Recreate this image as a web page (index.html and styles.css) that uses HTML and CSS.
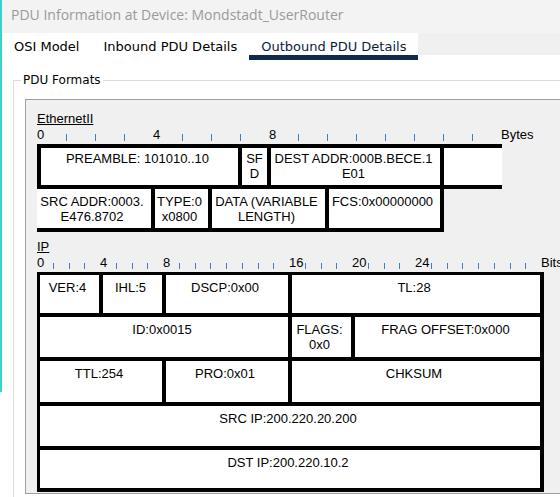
FILE: index.html
```html
<!DOCTYPE html>
<html>
<head>
<meta charset="utf-8">
<link rel="stylesheet" href="styles.css">
</head>
<body>
<div class="edge"><div class="edge-cyan"></div></div>
<div class="window">
  <div class="titlebar">PDU Information at Device: Mondstadt_UserRouter</div>
  <div class="tabs">
    <div class="tab">OSI Model</div>
    <div class="tab">Inbound PDU Details</div>
    <div class="tab active">Outbound PDU Details</div>
    <div class="tabfill"></div>
  </div>
  <div class="content">
    <fieldset class="group">
      <legend>PDU Formats</legend>
      <div class="panel">
        <div class="proto-name">EthernetII</div>
        <div class="ruler bytes">
          <span class="slot"><span class="num">0</span></span>
          <span class="slot"><span class="tick"></span></span>
          <span class="slot"><span class="tick"></span></span>
          <span class="slot"><span class="tick"></span></span>
          <span class="slot"><span class="num">4</span></span>
          <span class="slot"><span class="tick"></span></span>
          <span class="slot"><span class="tick"></span></span>
          <span class="slot"><span class="tick"></span></span>
          <span class="slot"><span class="num">8</span></span>
          <span class="slot"><span class="tick"></span></span>
          <span class="slot"><span class="tick"></span></span>
          <span class="slot"><span class="tick"></span></span>
          <span class="slot"><span class="tick"></span></span>
          <span class="slot"><span class="tick"></span></span>
          <span class="slot"><span class="tick"></span></span>
          <span class="slot"><span class="tick"></span></span>
          <span class="unit">Bytes</span>
        </div>
        <div class="eth-row r1">
          <div class="cell w-pre">PREAMBLE: 101010..10</div>
          <div class="cell w-sfd">SF<br>D</div>
          <div class="cell w-dest">DEST ADDR:000B.BECE.1<br>E01</div>
          <div class="cell w-tail"></div>
        </div>
        <div class="eth-row r2">
          <div class="cell w-src">SRC ADDR:0003.<br>E476.8702</div>
          <div class="cell w-type">TYPE:0<br>x0800</div>
          <div class="cell w-data">DATA (VARIABLE<br>LENGTH)</div>
          <div class="cell w-fcs">FCS:0x00000000</div>
        </div>

        <div class="proto-name ip-name">IP</div>
        <div class="ruler bits">
          <span class="slot"><span class="num">0</span></span>
          <span class="slot"><span class="tick"></span></span>
          <span class="slot"><span class="tick"></span></span>
          <span class="slot"><span class="tick"></span></span>
          <span class="slot"><span class="num">4</span></span>
          <span class="slot"><span class="tick"></span></span>
          <span class="slot"><span class="tick"></span></span>
          <span class="slot"><span class="tick"></span></span>
          <span class="slot"><span class="num">8</span></span>
          <span class="slot"><span class="tick"></span></span>
          <span class="slot"><span class="tick"></span></span>
          <span class="slot"><span class="tick"></span></span>
          <span class="slot"><span class="tick"></span></span>
          <span class="slot"><span class="tick"></span></span>
          <span class="slot"><span class="tick"></span></span>
          <span class="slot"><span class="tick"></span></span>
          <span class="slot"><span class="num">16</span></span>
          <span class="slot"><span class="tick"></span></span>
          <span class="slot"><span class="tick"></span></span>
          <span class="slot"><span class="tick"></span></span>
          <span class="slot"><span class="num">20</span></span>
          <span class="slot"><span class="tick"></span></span>
          <span class="slot"><span class="tick"></span></span>
          <span class="slot"><span class="tick"></span></span>
          <span class="slot"><span class="num">24</span></span>
          <span class="slot"><span class="tick"></span></span>
          <span class="slot"><span class="tick"></span></span>
          <span class="slot"><span class="tick"></span></span>
          <span class="slot"><span class="tick"></span></span>
          <span class="slot"><span class="tick"></span></span>
          <span class="slot"><span class="tick"></span></span>
          <span class="slot"><span class="tick"></span></span>
          <span class="unit">Bits</span>
        </div>
        <div class="ip">
          <div class="cell s4">VER:4</div>
          <div class="cell s4">IHL:5</div>
          <div class="cell s8">DSCP:0x00</div>
          <div class="cell s16">TL:28</div>
          <div class="cell s16">ID:0x0015</div>
          <div class="cell s4">FLAGS:<br>0x0</div>
          <div class="cell s12">FRAG OFFSET:0x000</div>
          <div class="cell s8">TTL:254</div>
          <div class="cell s8">PRO:0x01</div>
          <div class="cell s16">CHKSUM</div>
          <div class="cell s32">SRC IP:200.220.20.200</div>
          <div class="cell s32">DST IP:200.220.10.2</div>
        </div>
      </div>
    </fieldset>
  </div>
</div>
</body>
</html>
```
FILE: styles.css
```css
html, body {
  margin: 0;
  padding: 0;
  overflow: hidden;
}
body {
  width: 560px;
  height: 497px;
  display: flex;
  background: #fff;
}
.edge {
  width: 2px;
  flex: none;
}
.edge-cyan {
  height: 392px;
  background: #3ccfd0;
}
.window {
  flex: 1;
  min-width: 0;
  display: flex;
  flex-direction: column;
}
.titlebar {
  flex: none;
  height: 33px;
  box-sizing: border-box;
  padding: 5px 0 0 9px;
  background: #f3f3f3;
  color: #9a9a9a;
  font: 14px/19px "Open Sans", sans-serif;
  white-space: nowrap;
}
.tabs {
  flex: none;
  height: 27px;
  display: flex;
  align-items: flex-start;
  font: 13px/15px "DejaVu Sans", sans-serif;
}
.tab {
  height: 22px;
  box-sizing: border-box;
  padding: 6px 12px 0;
  background: #fff;
  color: #000;
  white-space: nowrap;
}
.tab.active {
  height: 27px;
  color: #0c1c3c;
  border-bottom: 5px solid #0e2a4c;
}
.tabfill {
  flex: 1;
  height: 22px;
  background: #f0f0f0;
}
.content {
  flex: 1;
  min-height: 0;
  padding-left: 11px;
}
.group {
  margin: 13px 0 0 0;
  padding: 0;
  width: 620px;
  height: 480px;
  box-sizing: border-box;
  border: 1px solid #dcdcdc;
}
.group legend {
  margin-left: 7px;
  padding: 0 2px;
  font: 12px/14px "DejaVu Sans", sans-serif;
  color: #000;
}
.panel {
  margin: 12px 0 0 11px;
  height: 381px;
  padding: 12px 0 0 11px;
  background: #f0f0f0;
  border: 1px solid #a0a0a0;
  border-right: none;
  overflow: hidden;
  font: 13px/15px "Liberation Sans", Arial, sans-serif;
  color: #000;
}
.proto-name {
  height: 14px;
  font: 13px/14px "Liberation Sans", Arial, sans-serif;
  text-decoration: underline;
}
.ip-name {
  margin-top: 8px;
}
.ruler {
  display: flex;
  height: 14px;
  margin-top: 2px;
  font: 13px/14px "Liberation Sans", Arial, sans-serif;
}
.slot {
  flex: none;
  display: flex;
  align-items: flex-end;
  height: 14px;
}
.bytes .slot { width: 29px; }
.bits .slot { width: 15.75px; }
.num {
  align-self: flex-start;
  white-space: nowrap;
}
.tick {
  width: 1px;
  height: 7px;
  margin-bottom: 1px;
  background: #3a80c6;
}
.bits .tick {
  height: 6px;
}
.unit {
  white-space: nowrap;
}
.cell {
  box-sizing: border-box;
  background: #fff;
  border-right: 4px solid #000;
  padding-right: 4px;
  text-align: center;
  white-space: nowrap;
  line-height: 15px;
}
.eth-row {
  display: flex;
  width: max-content;
}
.eth-row.r1 {
  margin-top: 2px;
  border-top: 4px solid #000;
  border-bottom: 4px solid #000;
  border-left: 4px solid #000;
}
.eth-row.r1 .cell {
  height: 37px;
  padding-top: 3px;
}
.eth-row.r2 {
  border-bottom: 4px solid #000;
}
.eth-row.r2 .cell {
  height: 39px;
  padding-top: 5px;
}
.w-pre { width: 201px; }
.w-sfd { width: 29px; }
.eth-row .w-sfd { padding-right: 0; }
.w-dest { width: 173px; }
.eth-row .w-tail { width: 58px; border-right: none; }
.w-src { width: 118px; }
.w-type { width: 57px; }
.w-data { width: 117px; }
.w-fcs { width: 115px; }
.ip {
  margin-top: 2px;
  display: grid;
  grid-template-columns: repeat(32, 15.75px);
  grid-template-rows: 42px 44px 45px 44px 42px;
  width: max-content;
  border-top: 3px solid #000;
  border-left: 3px solid #000;
}
.ip .cell {
  border-bottom: 4px solid #000;
  padding-top: 5px;
}
.s4 { grid-column: span 4; }
.s8 { grid-column: span 8; }
.s12 { grid-column: span 12; }
.s16 { grid-column: span 16; }
.s32 { grid-column: span 32; }
```
